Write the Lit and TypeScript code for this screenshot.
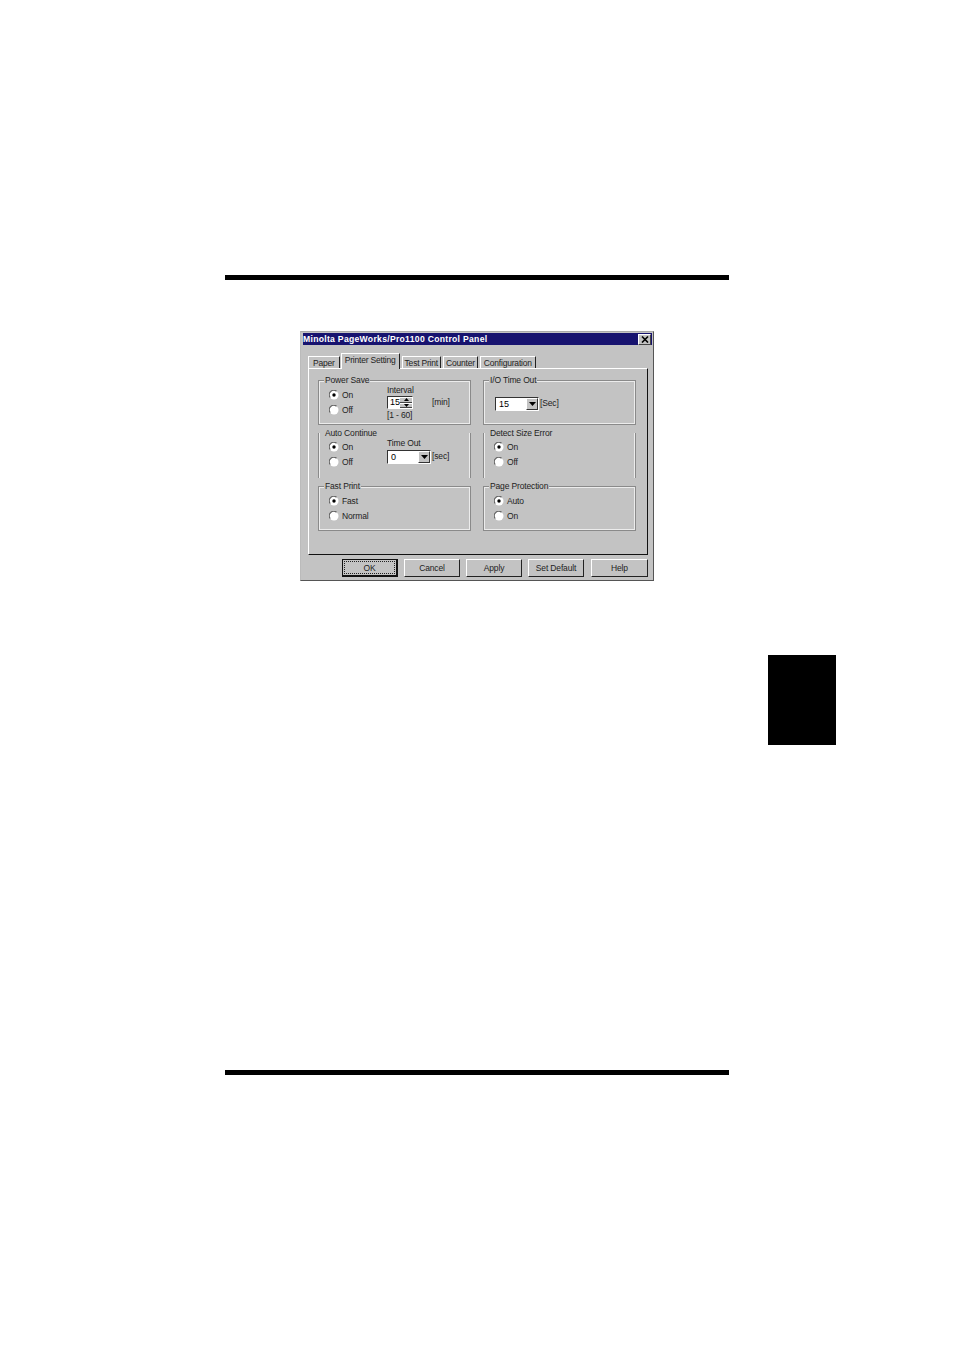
import { LitElement, html, css, svg } from "lit";
import { customElement } from "lit/decorators.js";

const arrow = html`<svg width="7" height="4" viewBox="0 0 7 4"><path d="M0 0H7L3.5 4Z" fill="#000" /></svg>`;
const dotMark = svg`<circle cx="5" cy="5" r="1.7" fill="#000" />`;

function radioItem(label: string, on: boolean) {
  return html`<div class="radio">
    <svg width="10" height="10" viewBox="0 0 10 10">
      <circle cx="5" cy="5" r="4.5" fill="#fff" />
      <path d="M1.2 7.5A4.5 4.5 0 0 1 7.5 1.2" fill="none" stroke="#666" stroke-width="1.2" />
      ${on ? dotMark : ""}
    </svg>
    <span>${label}</span>
  </div>`;
}

function radios(a: string, b: string) {
  return html`<div class="radios">${radioItem(a, true)}${radioItem(b, false)}</div>`;
}

@customElement("app-root")
export class AppRoot extends LitElement {
  static styles = css`
    :host { display: block; width: 954px; height: 1351px; background: #fff; font-family: "Liberation Sans", Arial, sans-serif; overflow: hidden; position: relative; }
    .page { display: flex; flex-direction: column; padding: 275px 225px 0; width: 504px; }
    .rule { height: 5px; background: #000; }
    .rule.end { margin-top: 489px; }
    .dialog { width: 354px; height: 250px; margin: 51px 0 0 75px; box-sizing: border-box; background: #c3c3c3; border: 1px solid #555; border-top-color: #aaa; border-left-color: #bbb; padding: 1px 1px 0 2px; display: flex; flex-direction: column; font-size: 8.5px; letter-spacing: -.15px; color: #222; }
    .title { height: 12px; background: #17136f; color: #fff; font-weight: 700; font-size: 8.6px; display: flex; align-items: center; justify-content: space-between; padding: 0 1px 0 0; letter-spacing: .3px; }
    .close { width: 13px; height: 11px; background: #c3c3c3; box-sizing: border-box; border: 1px solid; border-color: #fff #444 #444 #fff; display: flex; align-items: center; justify-content: center; }
    .tabs { display: flex; margin: 8px 0 0 5px; height: 15px; align-items: flex-end; position: relative; z-index: 1; letter-spacing: -.2px; }
    .tab { height: 12px; padding: 0 2px; margin-left: 2px; display: flex; align-items: center; border-top: 1px solid #fff; border-left: 1px solid #fff; border-right: 1px solid #222; box-sizing: border-box; white-space: nowrap; }
    .tab.wide { padding: 0 3px; }
    .tab.first { padding: 0 4px; margin-left: 0; }
    .tab.active { height: 16px; padding: 1px 3px 0; margin: 0 0 -1px 1px; background: #c3c3c3; align-items: flex-start; }
    .body { width: 340px; height: 187px; margin-left: 5px; box-sizing: border-box; border: 1px solid; border-color: #fff #111 #111 #fff; padding: 11px 11px 0 9px; display: grid; grid-template-columns: 153px 153px; column-gap: 12px; grid-auto-rows: 45px; row-gap: 8px; align-content: start; }
    .group { position: relative; box-sizing: border-box; border: 1px solid #8a8a8a; box-shadow: inset 0 0 0 1px #ececec; height: 45px; padding: 9px 0 0 10px; display: flex; }
    .legend { position: absolute; top: -6px; left: 5px; padding: 0 1px; background: #c3c3c3; line-height: 11px; white-space: nowrap; }
    .open { border-bottom: none; border-top: none; box-shadow: inset 1px 0 0 #ececec, inset -1px 0 0 #ececec; }
    .open .legend { top: -5px; }
    .pad-combo { padding: 16px 0 0 11px; }
    .radios { display: flex; flex-direction: column; gap: 5px; width: 58px; flex: none; }
    .radio { display: flex; align-items: center; gap: 3px; height: 10px; }
    .stack { display: flex; flex-direction: column; margin-top: -5px; }
    .stack.low { margin-top: -4px; gap: 2px; }
    .lbl { line-height: 10px; }
    .lbl.range { margin-top: 1px; }
    .spin { display: flex; align-items: center; gap: 19px; margin-top: 1px; }
    .raise2 { margin-bottom: 2px; }
    .raise3 { margin-bottom: 3px; }
    .field { background: #fff; border: 1px solid; border-color: #333 #fff #fff #333; box-sizing: border-box; display: flex; align-items: center; justify-content: space-between; height: 14px; padding-left: 3px; color: #000; font-size: 9px; letter-spacing: 0; }
    .s1 { width: 26px; height: 13px; padding-left: 2px; padding-bottom: 1px; }
    .combo { width: 44px; }
    .btns { display: flex; flex-direction: column; width: 12px; height: 11px; margin-top: 1px; }
    .btns i { flex: 1; background: #c3c3c3; border-bottom: 1px solid #444; border-top: 1px solid #fff; display: flex; align-items: center; justify-content: center; }
    .drop { width: 12px; height: 12px; background: #c3c3c3; display: flex; align-items: center; justify-content: center; border: 1px solid; border-color: #fff #333 #333 #fff; box-sizing: border-box; }
    .row { display: flex; align-items: center; gap: 1px; height: 14px; }
    .footer { display: flex; gap: 6px; margin: 4px 0 0 39px; }
    .btn { width: 56px; height: 18px; padding-bottom: 1px; display: flex; align-items: center; justify-content: center; box-sizing: border-box; border: 1px solid; border-color: #fff #222 #222 #fff; white-space: nowrap; }
    .btn.ok { border-color: #111; border-width: 1px 2px 2px 1px; padding-bottom: 0; }
    .btn.last { width: 57px; margin-left: 1px; }
    .btn.ok span { display: flex; align-items: center; justify-content: center; width: 100%; height: 100%; outline: 1px dotted #222; outline-offset: -2px; }
    .tabmark { position: absolute; left: 768px; top: 655px; width: 68px; height: 90px; background: #000; }
  `;

  render() {
    return html`
      <div class="page">
        <div class="rule"></div>
        <div class="dialog">
          <div class="title"><span>Minolta PageWorks/Pro1100 Control Panel</span><span class="close"><svg width="8" height="7" viewBox="0 0 8 7"><path d="M1 0.5L7 6.5M7 0.5L1 6.5" stroke="#000" stroke-width="1.6" /></svg></span></div>
          <div class="tabs">
            <div class="tab first">Paper</div>
            <div class="tab active">Printer Setting</div>
            <div class="tab">Test Print</div>
            <div class="tab">Counter</div>
            <div class="tab wide">Configuration</div>
          </div>
          <div class="body">
            <div class="group"><span class="legend">Power Save</span>
              ${radios("On", "Off")}
              <div class="stack"><span class="lbl">Interval</span>
                <div class="spin"><div class="field s1"><span>15</span><div class="btns"><i><svg width="5" height="3" viewBox="0 0 5 3"><path d="M2.5 0L5 3H0Z" fill="#000" /></svg></i><i><svg width="5" height="3" viewBox="0 0 5 3"><path d="M0 0H5L2.5 3Z" fill="#000" /></svg></i></div></div><span class="raise2">[min]</span></div>
                <span class="lbl range">[1 - 60]</span></div>
            </div>
            <div class="group pad-combo"><span class="legend">I/O Time Out</span>
              <div class="row"><div class="field combo">15<div class="drop">${arrow}</div></div><span class="raise2">[Sec]</span></div>
            </div>
            <div class="group open"><span class="legend">Auto Continue</span>
              ${radios("On", "Off")}
              <div class="stack low"><span class="lbl">Time Out</span>
                <div class="row"><div class="field combo">0<div class="drop">${arrow}</div></div><span class="raise3">[sec]</span></div></div>
            </div>
            <div class="group open"><span class="legend">Detect Size Error</span>${radios("On", "Off")}</div>
            <div class="group"><span class="legend">Fast Print</span>${radios("Fast", "Normal")}</div>
            <div class="group"><span class="legend">Page Protection</span>${radios("Auto", "On")}</div>
          </div>
          <div class="footer">
            <div class="btn ok"><span>OK</span></div>
            <div class="btn">Cancel</div>
            <div class="btn">Apply</div>
            <div class="btn">Set Default</div>
            <div class="btn last">Help</div>
          </div>
        </div>
        <div class="rule end"></div>
      </div>
      <div class="tabmark"></div>
    `;
  }
}
